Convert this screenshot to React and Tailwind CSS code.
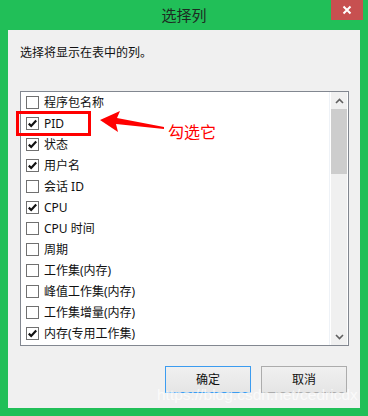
import React from "react";

const rows = [
  { label: "程序包名称", checked: false },
  { label: "PID", checked: true },
  { label: "状态", checked: true },
  { label: "用户名", checked: true },
  { label: "会话 ID", checked: false },
  { label: "CPU", checked: true },
  { label: "CPU 时间", checked: false },
  { label: "周期", checked: false },
  { label: "工作集(内存)", checked: false },
  { label: "峰值工作集(内存)", checked: false },
  { label: "工作集增量(内存)", checked: false },
  { label: "内存(专用工作集)", checked: true },
];

function CheckBox({ checked }) {
  return (
    <div className="w-[13px] h-[13px] border border-[#707070] bg-white flex items-center justify-center shrink-0">
      {checked && (
        <svg width="11" height="11" viewBox="0 0 11 11">
          <path d="M1.8 5.6 L4.2 8 L9.2 2.6" fill="none" stroke="#111" strokeWidth="2.2" />
        </svg>
      )}
    </div>
  );
}

export default function App() {
  return (
    <div className="relative w-[368px] h-[416px] bg-[#21bf58] flex flex-col font-['Noto_Sans','Noto_Sans_CJK_SC',sans-serif] overflow-hidden">
      {/* title bar */}
      <div className="h-[30px] flex items-center justify-center">
        <span className="text-[15px] text-[#1d2a22] leading-none">选择列</span>
      </div>
      <div className="absolute top-0 left-[331px] w-[32px] h-[20px] bg-[#c75050] flex items-center justify-center">
        <svg width="10" height="10" viewBox="0 0 10 10">
          <path d="M1.5 1.5 L8.5 8.5 M8.5 1.5 L1.5 8.5" stroke="white" strokeWidth="2" />
        </svg>
      </div>

      {/* client area */}
      <div className="relative mx-[8px] h-[378px] bg-[#f0f0f0] flex flex-col">
        <div className="pt-[15px] pl-[12px] text-[12px] leading-[16px] text-[#111]">选择将显示在表中的列。</div>

        <div className="mt-[30px] ml-[12px] w-[329px] h-[255px] border border-[#828790] bg-white flex">
          <div className="flex-1 flex flex-col">
            {rows.map((r) => (
              <div key={r.label} className="h-[21px] flex items-center pl-[5px] gap-[5px] text-[12px] text-[#111]">
                <CheckBox checked={r.checked} />
                <span className="leading-none">{r.label}</span>
              </div>
            ))}
          </div>
          <div className="w-[19px] border-l border-[#eef2f7] bg-white flex">
            <div className="w-[16px] ml-[1px] bg-[#f0f0f0] flex flex-col">
              <div className="h-[17px] flex items-center justify-center">
                <svg width="9" height="6" viewBox="0 0 9 6">
                  <path d="M1 5 L4.5 1.5 L8 5" fill="none" stroke="#606060" strokeWidth="1.6" />
                </svg>
              </div>
              <div className="h-[65px] bg-[#cdcdcd]"></div>
              <div className="flex-1"></div>
              <div className="h-[17px] flex items-center justify-center">
                <svg width="9" height="6" viewBox="0 0 9 6">
                  <path d="M1 1 L4.5 4.5 L8 1" fill="none" stroke="#606060" strokeWidth="1.6" />
                </svg>
              </div>
            </div>
          </div>
        </div>

        <div className="mt-[20px] flex justify-end gap-[10px] pr-[13px]">
          <button className="w-[86px] h-[27px] border border-[#3c9cf0] bg-gradient-to-b from-[#f0f0f0] to-[#e5e5e5] text-[12px] text-[#111]">确定</button>
          <button className="w-[86px] h-[27px] border border-[#acacac] bg-gradient-to-b from-[#f0f0f0] to-[#e5e5e5] text-[12px] text-[#111]">取消</button>
        </div>

        {/* annotation: red box */}
        <div className="absolute left-[8px] top-[81px] w-[75px] h-[25px] border-[3px] border-[#ff0000]"></div>
        {/* annotation: arrow */}
        <svg className="absolute left-[90px] top-[80px]" width="70" height="30" viewBox="0 0 70 30">
          <path d="M2 10 L22 1 L19 8 L66 17 L66 19 L18 14 L20 22 Z" fill="#ff0000" />
        </svg>
        <span className="absolute left-[160px] top-[94px] text-[16px] leading-none text-[#ff0000]">勾选它</span>

        {/* watermark */}
        <span className="absolute left-[149px] top-[357px] text-[15.5px] leading-none whitespace-nowrap text-white/70 font-['Liberation_Sans',sans-serif]">https://blog.csdn.net/cedricdx</span>
      </div>
    </div>
  );
}
